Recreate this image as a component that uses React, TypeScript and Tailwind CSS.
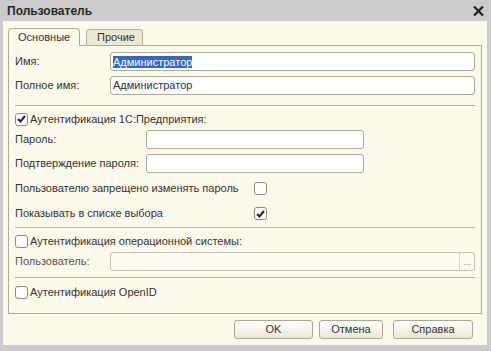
import React from "react";

function Check({ checked }: { checked?: boolean }) {
  return (
    <span className="flex h-[13px] w-[13px] shrink-0 items-center justify-center rounded-[3px] border border-[#8f8c7e] bg-white">
      {checked && (
        <svg width="9" height="8" viewBox="0 0 9 8">
          <path d="M1 4 L3.5 6.5 L8 1" fill="none" stroke="#222" strokeWidth="2" />
        </svg>
      )}
    </span>
  );
}

function Field({ className = "", children }: { className?: string; children?: React.ReactNode }) {
  return (
    <div
      className={
        "flex h-[19px] items-center rounded-[3px] border border-[#aeab98] bg-white px-[2px] " + className
      }
    >
      {children}
    </div>
  );
}

function Sep() {
  return <div className="mx-[6px] h-px bg-[#b7b49f]" />;
}

function Btn({ label, className = "" }: { label: string; className?: string }) {
  return (
    <button
      className={
        "h-[19px] rounded-[3px] border border-[#aaa793] bg-gradient-to-b from-[#fefefb] to-[#ebe8d6] text-[11px] text-[#333] " +
        className
      }
    >
      {label}
    </button>
  );
}

export default function App() {
  return (
    <div
      className="flex h-[351px] w-[491px] flex-col bg-[#cbcbcb] text-[11px] text-[#333]"
      style={{ fontFamily: '"Liberation Sans", Arial, sans-serif' }}
    >
      <div className="flex h-[21px] shrink-0 items-center justify-between pl-[7px] pr-[7px]">
        <span className="text-[12px] font-bold text-[#2a2a2a]">Пользователь</span>
        <svg width="11" height="10" viewBox="0 0 11 10">
          <path d="M1 0.5 L10 9.5 M10 0.5 L1 9.5" stroke="#222" strokeWidth="2.2" />
        </svg>
      </div>

      <div className="ml-[3px] mr-[4px] mb-[6px] flex flex-1 flex-col bg-[#fbf9e9] px-[5px] pt-[7px]">
        {/* tabs */}
        <div className="flex h-[17px] items-end gap-[6px]">
          <div className="relative z-10 -mb-px flex h-[18px] w-[72px] items-center rounded-t-[4px] border border-b-0 border-[#aeab96] bg-[#fbf9e9] pl-[9px]">
            Основные
          </div>
          <div className="flex h-[16px] w-[57px] items-center rounded-t-[4px] border border-b-0 border-[#b5b29c] bg-[#ece9d3] pl-[10px]">
            Прочие
          </div>
        </div>

        {/* panel */}
        <div className="flex h-[269px] w-[474px] flex-col border border-[#aeab96] bg-[#fbf9e9]">
          <div className="mt-[6px] flex items-center pl-[6px] pr-[6px]">
            <span className="w-[95px]">Имя:</span>
            <Field className="flex-1">
              <span className="bg-[#3169c6] leading-[12px] text-white">Администратор</span>
            </Field>
          </div>
          <div className="mt-[5px] flex items-center pl-[6px] pr-[6px]">
            <span className="w-[95px]">Полное имя:</span>
            <Field className="flex-1">
              <span>Администратор</span>
            </Field>
          </div>

          <div className="mt-[10px]">
            <Sep />
          </div>

          <div className="mt-[5px] flex h-[16px] items-center gap-[2px] pl-[6px]">
            <Check checked />
            <span>Аутентификация 1С:Предприятия:</span>
          </div>
          <div className="mt-[3px] flex items-center pl-[6px]">
            <span className="w-[131px]">Пароль:</span>
            <Field className="w-[218px]" />
          </div>
          <div className="mt-[5px] flex items-center pl-[6px]">
            <span className="w-[131px]">Подтверждение пароля:</span>
            <Field className="w-[218px]" />
          </div>
          <div className="mt-[6px] flex h-[19px] items-center pl-[6px]">
            <span className="w-[239px]">Пользователю запрещено изменять пароль</span>
            <Check />
          </div>
          <div className="mt-[6px] flex h-[19px] items-center pl-[6px]">
            <span className="w-[239px]">Показывать в списке выбора</span>
            <Check checked />
          </div>

          <div className="mt-[4px]">
            <Sep />
          </div>

          <div className="mt-[4px] flex h-[19px] items-center gap-[2px] pl-[6px]">
            <Check />
            <span>Аутентификация операционной системы:</span>
          </div>
          <div className="mt-[1px] flex items-center pl-[6px] pr-[6px]">
            <span className="w-[95px] text-[#555]">Пользователь:</span>
            <div className="flex h-[19px] flex-1 items-stretch rounded-[3px] border border-[#c6c3b0] bg-[#fcfbf2]">
              <div className="flex-1" />
              <div className="flex w-[15px] items-end justify-center border-l border-[#d6d3c2] pb-[3px] text-[9px] leading-none text-[#8a8a8a]">
                ...
              </div>
            </div>
          </div>

          <div className="mt-[6px]">
            <Sep />
          </div>

          <div className="mt-[5px] flex h-[19px] items-center gap-[2px] pl-[6px]">
            <Check />
            <span>Аутентификация OpenID</span>
          </div>
        </div>

        {/* buttons */}
        <div className="mt-[6px] flex justify-end pr-[9px]">
          <Btn label="OK" className="w-[79px]" />
          <Btn label="Отмена" className="ml-[6px] w-[64px]" />
          <Btn label="Справка" className="ml-[10px] w-[80px]" />
        </div>
      </div>
    </div>
  );
}
